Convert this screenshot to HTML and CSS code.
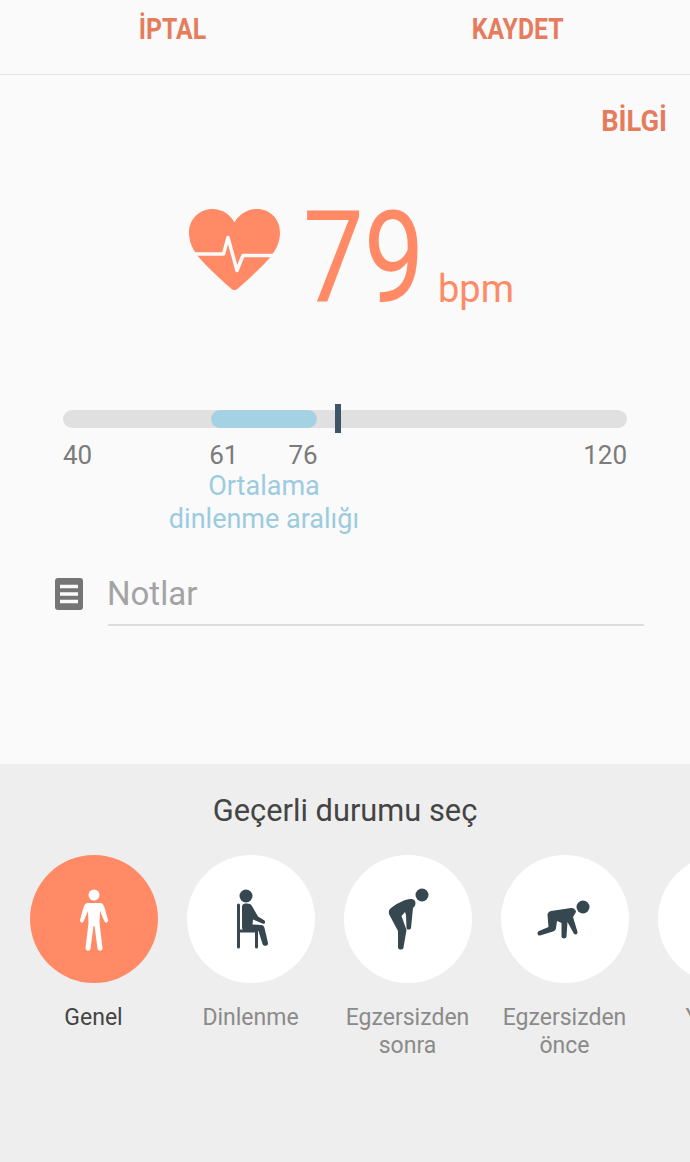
FILE: index.html
```html
<!DOCTYPE html>
<html lang="tr">
<head>
<meta charset="utf-8">
<title>Nabız</title>
<link rel="stylesheet" href="styles.css">
</head>
<body>
<div class="page">
  <header class="topbar">
    <span class="action">İPTAL</span>
    <span class="action">KAYDET</span>
  </header>
  <main class="main">
    <div class="info-row"><span class="action info">BİLGİ</span></div>
    <div class="reading">
      <svg class="heart" viewBox="0 0 92 83" aria-hidden="true">
        <path class="heart-fill" d="M45.500 14.500C41 6 32.500 1 23.500 1C10.500 1 0 11 0 24.500C0 33 3 40 8 47C16 57 30 70 42 80.500C44.500 82.500 46.500 82.500 49 80.500C61 70 75 57 83 47C88 40 91 33 91 24.500C91 11 81 1 68 1C59 1 50 6 45.500 14.500Z"/>
        <path class="heart-line" d="M0 46H34.500L39 29.500L48 62.500L54 47.500H92"/>
      </svg>
      <span class="value">79</span>
      <span class="unit">bpm</span>
    </div>
    <div class="slider">
      <div class="track">
        <div class="range"></div>
        <div class="marker"></div>
      </div>
      <div class="scale">
        <span class="s40">40</span>
        <span class="s61">61</span>
        <span class="s76">76</span>
        <span class="s120">120</span>
      </div>
      <div class="range-label">Ortalama<br>dinlenme aralığı</div>
    </div>
    <div class="notes">
      <svg class="notes-icon" viewBox="0 0 28 32" aria-hidden="true">
        <rect width="28" height="32" rx="3" class="notes-bg"/>
        <path class="notes-lines" d="M5 8.500H23M5 16H23M5 23.500H23"/>
      </svg>
      <div class="notes-field">Notlar</div>
    </div>
  </main>
  <section class="panel">
    <h2 class="panel-title">Geçerli durumu seç</h2>
    <div class="states">
      <div class="state active">
        <div class="circle">
          <svg class="glyph" viewBox="0 0 128 128" aria-hidden="true">
            <circle cx="64" cy="40" r="5.500" class="f"/>
            <path class="f" d="M58 48H70C72 48 73 49 74 51L78 65C78.500 67.500 75.500 68.500 74.500 66.500L70 56L69.500 68L72.500 93C72.500 96.500 68 96.500 67.500 93.500L64.500 71H63.500L60.500 93.500C60 96.500 55.500 96.500 55.500 93L58.500 68L58 56L53.500 66.500C52.500 68.500 49.500 67.500 50 65L54 51C55 49 56 48 58 48Z"/>
          </svg>
        </div>
        <div class="label">Genel</div>
      </div>
      <div class="state">
        <div class="circle">
          <svg class="glyph" viewBox="0 0 128 128" aria-hidden="true">
            <circle cx="59" cy="41" r="6.500" class="d"/>
            <path class="s3" d="M51.500 50V92M51.500 76H69.500V92"/>
            <path class="d" d="M58 48.500C62 48 64.500 49 65.500 52L71 61.500L77.500 65.500C79 67 77.500 69.500 75.500 68.500L66 64.500L65.500 69.500L74 70C76 70 77 71 77.500 73L81 88C81.500 91 76.500 92 75.500 89L71.500 76L59 76C56.500 76 55 74.500 55 72V52C55 50 56 48.800 58 48.500Z"/>
          </svg>
        </div>
        <div class="label">Dinlenme</div>
      </div>
      <div class="state">
        <div class="circle">
          <svg class="glyph" viewBox="0 0 128 128" aria-hidden="true">
            <circle cx="78" cy="40" r="6.500" class="d"/>
            <path class="d" d="M66 44C69 43.500 71.500 45 71.500 48C71.500 50 70.500 52 69 53L67 73C66.500 75 62.500 75 62.500 73L62 60L61 57L57.500 61L62.500 75L59.500 92.500C59 95.500 54 95 54 92.500L54 76L45.500 60C44.500 58 44.500 55.500 46 54C51 49.500 59 45 66 44Z"/>
          </svg>
        </div>
        <div class="label">Egzersizden<br>sonra</div>
      </div>
      <div class="state">
        <div class="circle">
          <svg class="glyph" viewBox="0 0 128 128" aria-hidden="true">
            <circle cx="82" cy="52" r="6.500" class="d"/>
            <path class="d" d="M50 56L70 53C73 53 75 55 75 57L72 62L76.500 77C77 79.500 73.500 80.500 72.500 78L66.500 67L65.500 81.500C65.500 84 60.500 84 60.500 81.500L60.500 68L56 66L55 73C55 75 53.500 76 52 76.500L39 80.500C36.500 81 35.500 77 38 76L47.500 72L46.500 60C46.500 58 48 56.500 50 56Z"/>
          </svg>
        </div>
        <div class="label">Egzersizden<br>önce</div>
      </div>
      <div class="state">
        <div class="circle"></div>
        <div class="label">Yorgun</div>
      </div>
    </div>
  </section>
</div>
</body>
</html>
```
FILE: styles.css
```css
* { box-sizing: border-box; }
html, body { margin: 0; padding: 0; }
body { font-family: Roboto, "Liberation Sans", sans-serif; background: #fafafa; }
.page { width: 690px; height: 1162px; overflow: hidden; display: flex; flex-direction: column; background: #fafafa; }
.action { display: inline-block; font-weight: 700; font-size: 29px; line-height: 34px; color: #e67c5e; transform: scaleX(0.855); }
.info { transform: scaleX(0.94); transform-origin: right center; }
.topbar { height: 75px; flex: none; border-bottom: 1px solid #e6e6e6; display: grid; grid-template-columns: 345px 345px; justify-items: center; align-items: center; padding-bottom: 16px; }
.main { flex: 1; padding: 0; }
.info-row { display: flex; justify-content: flex-end; padding: 29px 23px 0 0; height: 62px; }
.reading { display: flex; align-items: flex-start; height: 120px; margin-top: 71px; padding-left: 189px; }
.heart { width: 92px; height: 83px; flex: none; }
.heart-fill { fill: #ff8a65; }
.heart-line { fill: none; stroke: #fafafa; stroke-width: 3.500; stroke-linejoin: round; }
.value { display: inline-block; width: 116px; flex: none; font-size: 128px; line-height: 100px; color: #ff8a65; margin-left: 22px; transform: scaleX(0.845); transform-origin: left center; }
.unit { font-size: 38px; line-height: 44px; color: #ff8a65; margin-left: 19px; margin-top: 59px; }
.slider { margin-top: 82px; padding: 0 63px; }
.track { position: relative; height: 18px; border-radius: 9px; background: #e0e0e0; }
.range { position: absolute; left: 148px; top: 0; width: 106px; height: 18px; border-radius: 9px; background: #a5d1e5; }
.marker { position: absolute; left: 272px; top: -6px; width: 6px; height: 29px; background: #3d5567; }
.scale { display: flex; font-size: 26px; line-height: 30px; color: #7b7b7b; margin-top: 12px; }
.s61 { margin-left: 117px; }
.s76 { margin-left: 50px; }
.s120 { margin-left: auto; }
.range-label { width: 402px; text-align: center; font-size: 27px; line-height: 33px; color: #9ccbe0; }
.notes { display: flex; align-items: flex-start; padding-left: 55px; margin-top: 27px; }
.notes-icon { width: 28px; height: 32px; flex: none; margin-top: 15px; }
.notes-bg { fill: #757575; }
.notes-lines { stroke: #fafafa; stroke-width: 3.500; fill: none; }
.notes-field { width: 536px; margin-left: 25px; height: 63px; border-bottom: 2px solid #dcdcdc; font-size: 33px; line-height: 62px; text-indent: -1px; color: #a3a3a3; }
.panel { height: 398px; flex: none; background: #eeeeee; }
.panel-title { margin: 0; padding-top: 29px; text-align: center; font-weight: 400; font-size: 30.800px; line-height: 36px; color: #444444; }
.states { display: flex; margin-top: 26px; padding-left: 15px; }
.state { flex: none; width: 157px; display: flex; flex-direction: column; align-items: center; }
.circle { width: 128px; height: 128px; border-radius: 50%; background: #ffffff; }
.active .circle { background: #ff8a65; }
.glyph { display: block; width: 128px; height: 128px; }
.f { fill: #ffffff; }
.d { fill: #36474f; }
.s3 { fill: none; stroke: #36474f; stroke-width: 3; stroke-linecap: round; }
.label { margin-top: 21px; text-align: center; font-size: 23px; line-height: 28px; color: #8a8a8a; }
.active .label { color: #444444; }
```
